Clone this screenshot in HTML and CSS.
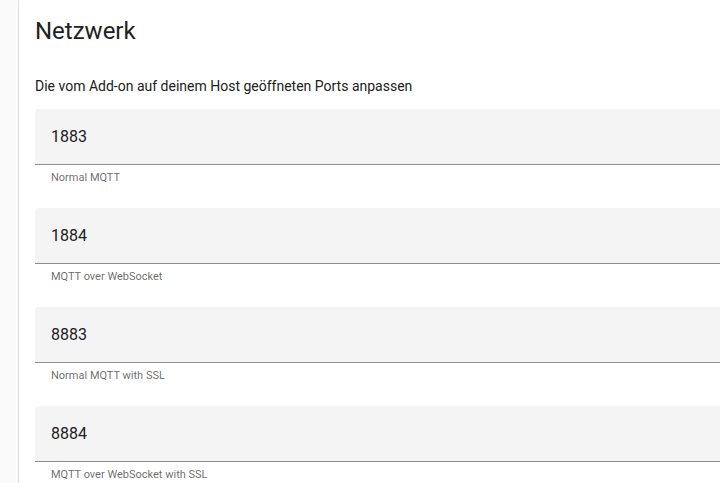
FILE: index.html
```html
<!DOCTYPE html>
<html>
<head>
<meta charset="utf-8">
<title>Netzwerk</title>
<link rel="stylesheet" href="styles.css">
</head>
<body>
<div class="page">
  <div class="card">
    <h1 class="card-header">Netzwerk</h1>
    <div class="card-content">
      <p class="description">Die vom Add-on auf deinem Host geöffneten Ports anpassen</p>
      <div class="port">
        <div class="field"><span class="value">1883</span></div>
        <div class="helper">Normal MQTT</div>
      </div>
      <div class="port">
        <div class="field"><span class="value">1884</span></div>
        <div class="helper">MQTT over WebSocket</div>
      </div>
      <div class="port">
        <div class="field"><span class="value">8883</span></div>
        <div class="helper">Normal MQTT with SSL</div>
      </div>
      <div class="port">
        <div class="field"><span class="value">8884</span></div>
        <div class="helper">MQTT over WebSocket with SSL</div>
      </div>
    </div>
  </div>
</div>
</body>
</html>
```

FILE: styles.css
```css
html, body {
  margin: 0;
  background: #fafafa;
  font-family: Roboto, "Noto Sans", sans-serif;
  color: #212121;
  overflow: hidden;
}
.page {
  padding-left: 18px;
  height: 483px;
  overflow: hidden;
}
.card {
  margin-top: -10px;
  margin-right: -24px;
  background: #fff;
  border: 1px solid #e0e0e0;
  border-radius: 12px;
}
.card-header {
  margin: 0;
  padding: 24px 16px 0;
  font-size: 24px;
  font-weight: 400;
  line-height: 32px;
}
.card-content {
  padding: 0 16px;
}
.description {
  margin: 29px 0 13px;
  font-size: 14px;
  line-height: 20px;
}
.port {
  margin-bottom: 22px;
}
.field {
  display: flex;
  align-items: center;
  height: 55px;
  padding: 0 16px;
  background: #f4f4f4;
  border-bottom: 1px solid rgba(0, 0, 0, 0.42);
  border-radius: 4px 4px 0 0;
}
.value {
  font-size: 16px;
  color: #212121;
}
.helper {
  margin-top: 5px;
  padding: 0 16px;
  font-size: 11px;
  line-height: 16px;
  color: rgba(0, 0, 0, 0.6);
}
```
